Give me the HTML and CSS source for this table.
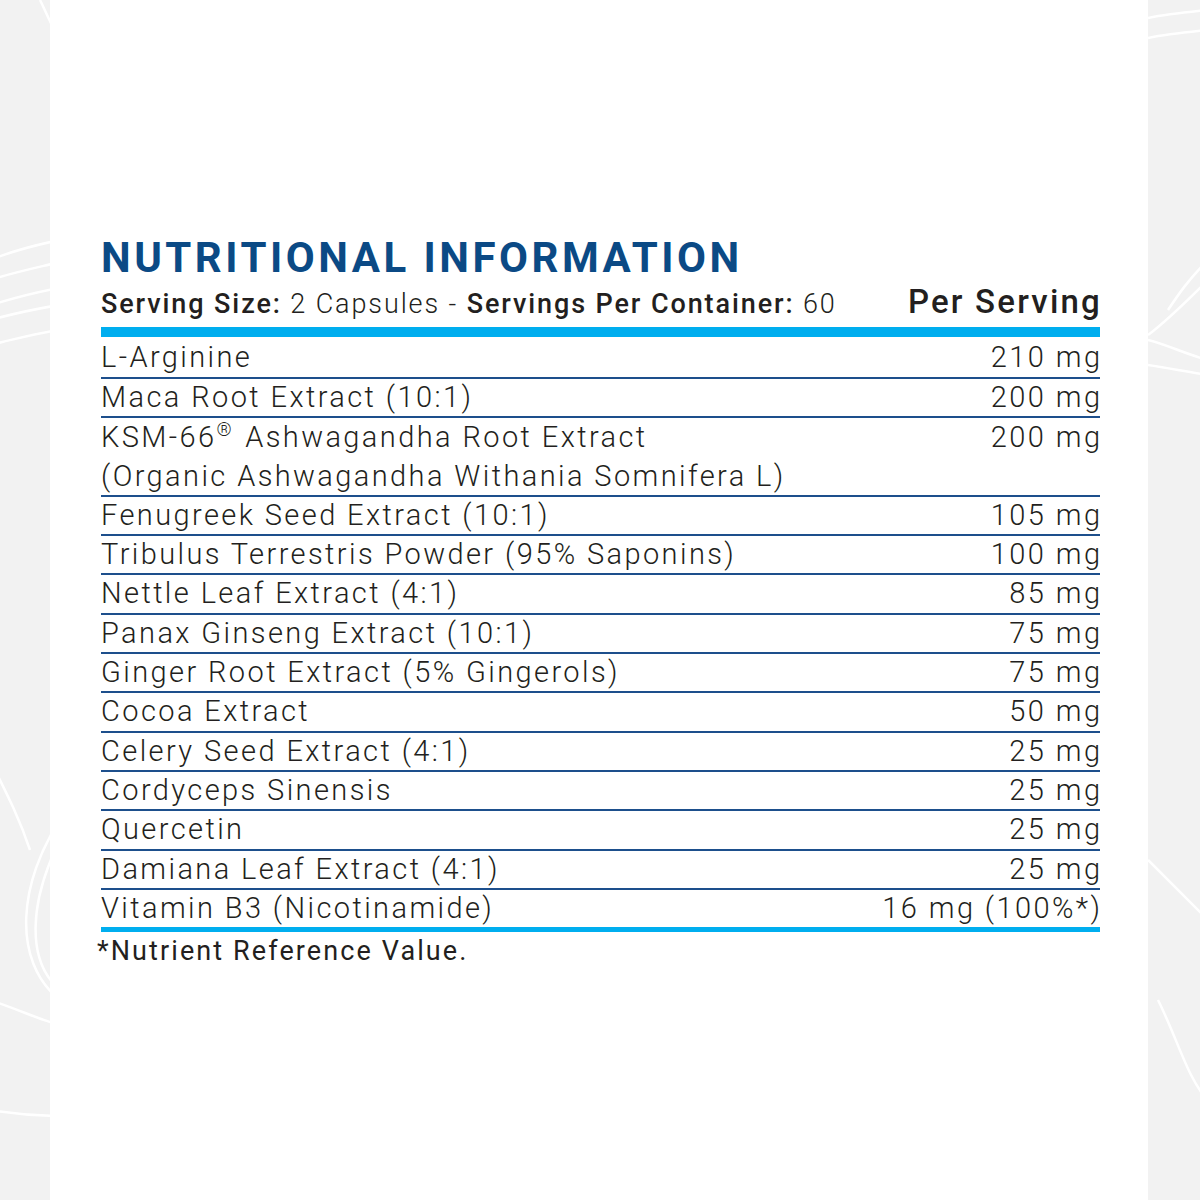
FILE: index.html
```html
<!DOCTYPE html>
<html>
<head>
<meta charset="utf-8">
<link rel="stylesheet" href="styles.css">
</head>
<body>
<div class="page">
  <div class="side side-left">
    <svg width="50" height="1200" viewBox="0 0 50 1200">
      <g fill="none" stroke="#ffffff" stroke-width="2.5">
        <path d="M-10 260 C 15 250, 35 245, 60 240"/>
        <path d="M-10 280 C 15 272, 35 268, 60 262"/>
        <path d="M-10 305 C 15 298, 35 292, 60 288"/>
        <path d="M-10 320 C 20 312, 40 308, 60 305"/>
        <path d="M-10 345 C 20 338, 40 332, 60 330"/>
        <path d="M40 0 C 45 10, 48 18, 52 25"/>
        <path d="M60 820 C 20 880, 10 960, 60 1000"/>
        <path d="M60 840 C 30 900, 25 960, 60 990"/>
        <path d="M-10 1000 C 20 1010, 40 1020, 60 1025"/>
        <path d="M-10 1110 C 20 1115, 40 1116, 60 1116"/>
        <path d="M-10 760 C 10 800, 20 820, 30 850"/>
      </g>
    </svg>
  </div>
  <main class="panel">
    <h1 class="title">NUTRITIONAL INFORMATION</h1>
    <div class="serving">
      <div class="serving-info"><b>Serving Size:</b> 2 Capsules - <b>Servings Per Container:</b> 60</div>
      <div class="per">Per Serving</div>
    </div>
    <div class="table">
      <div class="row"><span>L-Arginine</span><span>210 mg</span></div>
      <div class="row"><span>Maca Root Extract (10:1)</span><span>200 mg</span></div>
      <div class="row row-two"><span>KSM-66<sup>®</sup> Ashwagandha Root Extract<br>(Organic Ashwagandha Withania Somnifera L)</span><span>200 mg</span></div>
      <div class="row"><span>Fenugreek Seed Extract (10:1)</span><span>105 mg</span></div>
      <div class="row"><span>Tribulus Terrestris Powder (95% Saponins)</span><span>100 mg</span></div>
      <div class="row"><span>Nettle Leaf Extract (4:1)</span><span>85 mg</span></div>
      <div class="row"><span>Panax Ginseng Extract (10:1)</span><span>75 mg</span></div>
      <div class="row"><span>Ginger Root Extract (5% Gingerols)</span><span>75 mg</span></div>
      <div class="row"><span>Cocoa Extract</span><span>50 mg</span></div>
      <div class="row"><span>Celery Seed Extract (4:1)</span><span>25 mg</span></div>
      <div class="row"><span>Cordyceps Sinensis</span><span>25 mg</span></div>
      <div class="row"><span>Quercetin</span><span>25 mg</span></div>
      <div class="row"><span>Damiana Leaf Extract (4:1)</span><span>25 mg</span></div>
      <div class="row row-last"><span>Vitamin B3 (Nicotinamide)</span><span>16 mg (100%*)</span></div>
    </div>
    <p class="note">*Nutrient Reference Value.</p>
  </main>
  <div class="side side-right">
    <svg width="52" height="1200" viewBox="0 0 52 1200">
      <g fill="none" stroke="#ffffff" stroke-width="2.5">
        <path d="M0 18 C 20 14, 40 12, 60 10"/>
        <path d="M0 38 C 20 34, 40 32, 60 30"/>
        <path d="M20 310 C 30 295, 40 280, 60 260"/>
        <path d="M0 335 C 20 320, 40 300, 60 280"/>
        <path d="M0 340 C 20 345, 40 355, 60 360"/>
        <path d="M0 365 C 20 368, 40 372, 60 375"/>
        <path d="M0 860 C 20 880, 40 900, 60 920"/>
        <path d="M10 1000 C 30 1040, 40 1080, 60 1100"/>
      </g>
    </svg>
  </div>
</div>
</body>
</html>
```
FILE: styles.css
```css
html, body {
  margin: 0;
  padding: 0;
}
body {
  width: 1200px;
  height: 1200px;
  overflow: hidden;
  background: #f2f2f2;
  font-family: "Roboto", "Liberation Sans", sans-serif;
  color: #231f20;
}
.page {
  display: flex;
  width: 1200px;
  height: 1200px;
}
.side {
  background: #f2f2f2;
  flex: none;
}
.side svg {
  display: block;
}
.side-left { width: 50px; }
.side-right { width: 52px; }
.panel {
  flex: none;
  width: 1098px;
  background: #ffffff;
  box-sizing: border-box;
  padding: 234px 48px 0 51px;
}
.title {
  margin: 0;
  font-family: "Roboto", sans-serif;
  font-weight: 700;
  font-size: 42px;
  line-height: 48px;
  letter-spacing: 3.5px;
  color: #0b4a85;
}
.serving {
  display: flex;
  justify-content: space-between;
  align-items: baseline;
  height: 45px;
  border-bottom: 10px solid #00aeef;
  box-sizing: content-box;
}
.serving-info {
  font-size: 27px;
  font-weight: 300;
  line-height: 40px;
  letter-spacing: 1.9px;
}
.serving-info b {
  font-weight: 500;
}
.per {
  font-size: 33px;
  font-weight: 500;
  line-height: 40px;
  letter-spacing: 2.2px;
  margin-right: -2px;
}
.row {
  display: flex;
  justify-content: space-between;
  align-items: flex-start;
  font-size: 29px;
  font-weight: 300;
  line-height: 37.3px;
  letter-spacing: 2.4px;
  border-bottom: 2px solid #1d4f8c;
}
.row > span:last-child {
  margin-right: -2.4px;
}
.row:first-child {
  line-height: 40px;
}
.row-two {
  line-height: 38.3px;
}
.row-last {
  border-bottom: 5px solid #00aeef;
}
.row sup {
  font-size: 19px;
  line-height: 0;
  letter-spacing: 0;
  margin-right: 4px;
  vertical-align: 11px;
}
.note {
  margin: 3px 0 0 -4px;
  font-size: 27px;
  font-weight: 400;
  line-height: 32px;
  letter-spacing: 2.1px;
}
```
